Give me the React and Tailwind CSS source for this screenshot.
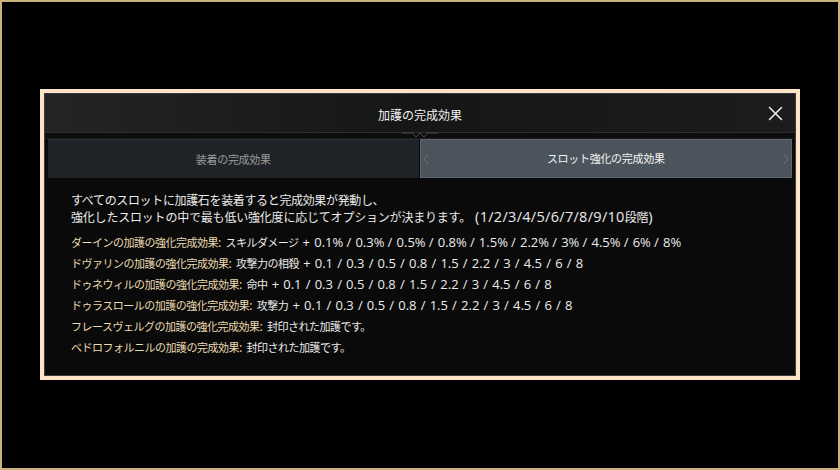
import React from "react";

const items = [
  ["ダーインの加護の強化完成効果:", " スキルダメージ + 0.1% / 0.3% / 0.5% / 0.8% / 1.5% / 2.2% / 3% / 4.5% / 6% / 8%"],
  ["ドヴァリンの加護の強化完成効果:", " 攻撃力の相殺 + 0.1 / 0.3 / 0.5 / 0.8 / 1.5 / 2.2 / 3 / 4.5 / 6 / 8"],
  ["ドゥネウィルの加護の強化完成効果:", " 命中 + 0.1 / 0.3 / 0.5 / 0.8 / 1.5 / 2.2 / 3 / 4.5 / 6 / 8"],
  ["ドゥラスロールの加護の強化完成効果:", " 攻撃力 + 0.1 / 0.3 / 0.5 / 0.8 / 1.5 / 2.2 / 3 / 4.5 / 6 / 8"],
  ["フレースヴェルグの加護の強化完成効果:", " 封印された加護です。"],
  ["ベドロフォルニルの加護の完成効果:", " 封印された加護です。"],
];

const CJK = /([\u3000-\u30ff\u3400-\u9fff\uff00-\uffef]+)/;
const PCT = /(%)/;

function Latin({ text, className }) {
  return (
    <span className={className} style={{ fontFamily: '"Open Sans", "Noto Sans", sans-serif' }}>
      {text.split(PCT).filter(Boolean).map((s, i) =>
        s === "%" ? (
          <span key={i} className="tracking-[-1px]">%</span>
        ) : (
          <React.Fragment key={i}>{s}</React.Fragment>
        )
      )}
    </span>
  );
}

function Mixed({ text, cjk, latin }) {
  return text.split(CJK).filter(Boolean).map((s, i) =>
    CJK.test(s) ? (
      <span key={i} className={cjk}>{s}</span>
    ) : (
      <Latin key={i} text={s} className={latin} />
    )
  );
}

export default function App() {
  return (
    <div
      className="w-[840px] h-[470px] bg-black border-2 border-[#c9b27c] flex items-center justify-center"
      style={{ fontFamily: '"Noto Sans CJK JP", "Noto Sans", sans-serif' }}
    >
      <div className="w-[760px] h-[291px] border-[4px] border-[#fde4c6] bg-[#0a0a0a] flex flex-col mt-[-1px]">
        <div className="flex-1 border border-[#3b3b3b] flex flex-col">
          {/* header */}
          <div className="relative h-[39px] bg-gradient-to-r from-[#242424] via-[#161616] to-[#1c1c1c] flex items-center justify-center border-b border-[#2e2e2e]">
            <span className="text-[12px] text-[#f2f2f2] mt-[3px]">加護の完成効果</span>
            <svg className="absolute right-[12px] top-[12px]" width="15" height="15" viewBox="0 0 15 15">
              <path d="M1.5 1.5 L13.5 13.5 M13.5 1.5 L1.5 13.5" stroke="#e8e8e8" strokeWidth="1.6" strokeLinecap="round" />
            </svg>
          </div>
          <div className="relative h-[6px] border-b border-[#1c1c1c] bg-[#0d0d0d]">
            <svg className="absolute left-1/2 -translate-x-1/2 top-[-2px]" width="40" height="8" viewBox="0 0 40 8">
              <path d="M2 2 L12 2 L16 6 L20 2 L24 6 L28 2 L38 2" stroke="#4a4a4a" strokeWidth="1" fill="none" />
            </svg>
          </div>
          {/* tabs */}
          <div className="flex px-[3px] gap-[1px]">
            <div className="flex-1 h-[39px] bg-[#1f2226] border-t border-[#2a2d31] flex items-center justify-center text-[11px] text-[#9c9c9c] tracking-[-0.3px]">
              装着の完成効果
            </div>
            <div className="relative flex-1 h-[39px] bg-[#4b545c] border border-[#5e676f] flex items-center justify-center text-[11px] text-[#f4f4f4] tracking-[-0.3px]">
              <svg className="absolute left-[2px] top-[13px]" width="6" height="12" viewBox="0 0 6 12">
                <path d="M5 1 L1 6 L5 11" stroke="#6c757d" strokeWidth="1" fill="none" />
              </svg>
              スロット強化の完成効果
              <svg className="absolute right-[2px] top-[13px]" width="6" height="12" viewBox="0 0 6 12">
                <path d="M1 1 L5 6 L1 11" stroke="#6c757d" strokeWidth="1" fill="none" />
              </svg>
            </div>
          </div>
          {/* content */}
          <div className="flex-1 pl-[26px] pt-[12px] text-[#ececec]">
            <div className="leading-[17px]">
              <div className="h-[17px] whitespace-pre">
                <Mixed text="すべてのスロットに加護石を装着すると完成効果が発動し、" cjk="text-[12px] tracking-[-0.35px]" latin="text-[13.5px]" />
              </div>
              <div className="h-[17px] whitespace-pre">
                <Mixed text="強化したスロットの中で最も低い強化度に応じてオプションが決まります。 (1/2/3/4/5/6/7/8/9/10段階)" cjk="text-[12px] tracking-[-0.2px]" latin="text-[14.5px] tracking-[0.3px]" />
              </div>
            </div>
            <div className="mt-[6px] flex flex-col leading-[21px]">
              {items.map(([a, b], i) => (
                <div key={i} className="h-[21px] whitespace-pre">
                  <span className="text-[#eadbb0]">
                    <Mixed text={a} cjk="text-[11px] tracking-[-0.5px]" latin="text-[12.5px]" />
                  </span>
                  <span className="text-[#ececec]">
                    <Mixed text={b} cjk="text-[11px] tracking-[-0.5px]" latin="text-[13px] [word-spacing:0.8px]" />
                  </span>
                </div>
              ))}
            </div>
          </div>
        </div>
      </div>
    </div>
  );
}
